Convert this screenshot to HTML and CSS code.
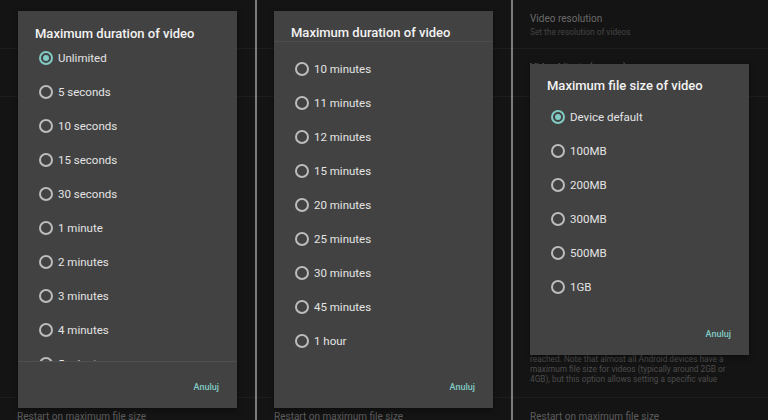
FILE: index.html
```html
<!DOCTYPE html>
<html>
<head>
<meta charset="utf-8">
<link rel="stylesheet" href="styles.css">
</head>
<body>
<div class="screens">

  <section class="panel">
    <div class="bg">
      <div class="pref blank top"></div>
      <div class="pref blank"></div>
      <div class="spacer"></div>
      <div class="pref blank"></div>
      <div class="pref last">
        <div class="pref-title">Restart on maximum file size</div>
      </div>
    </div>
    <div class="dialog d1">
      <div class="dlg-title">Maximum duration of video</div>
      <div class="list clipped">
        <div class="opt"><span class="radio on"></span>Unlimited</div>
        <div class="opt"><span class="radio"></span>5 seconds</div>
        <div class="opt"><span class="radio"></span>10 seconds</div>
        <div class="opt"><span class="radio"></span>15 seconds</div>
        <div class="opt"><span class="radio"></span>30 seconds</div>
        <div class="opt"><span class="radio"></span>1 minute</div>
        <div class="opt"><span class="radio"></span>2 minutes</div>
        <div class="opt"><span class="radio"></span>3 minutes</div>
        <div class="opt"><span class="radio"></span>4 minutes</div>
        <div class="opt"><span class="radio"></span>5 minutes</div>
      </div>
      <div class="actions"><span class="btn">Anuluj</span></div>
    </div>
  </section>

  <div class="sep"></div>

  <section class="panel">
    <div class="bg">
      <div class="pref blank top"></div>
      <div class="pref blank"></div>
      <div class="spacer"></div>
      <div class="pref blank"></div>
      <div class="pref last">
        <div class="pref-title">Restart on maximum file size</div>
      </div>
    </div>
    <div class="dialog d2">
      <div class="dlg-title ruled">Maximum duration of video</div>
      <div class="list">
        <div class="opt"><span class="radio"></span>10 minutes</div>
        <div class="opt"><span class="radio"></span>11 minutes</div>
        <div class="opt"><span class="radio"></span>12 minutes</div>
        <div class="opt"><span class="radio"></span>15 minutes</div>
        <div class="opt"><span class="radio"></span>20 minutes</div>
        <div class="opt"><span class="radio"></span>25 minutes</div>
        <div class="opt"><span class="radio"></span>30 minutes</div>
        <div class="opt"><span class="radio"></span>45 minutes</div>
        <div class="opt"><span class="radio"></span>1 hour</div>
      </div>
      <div class="actions"><span class="btn">Anuluj</span></div>
    </div>
  </section>

  <div class="sep"></div>

  <section class="panel">
    <div class="bg">
      <div class="pref first">
        <div class="pref-title">Video resolution</div>
        <div class="pref-sub">Set the resolution of videos</div>
      </div>
      <div class="pref second">
        <div class="pref-title">Video bitrate (approx)</div>
      </div>
      <div class="spacer"></div>
      <div class="pref desc">
        <div class="pref-sub">reached. Note that almost all Android devices have a</div>
        <div class="pref-sub">maximum file size for videos (typically around 2GB or</div>
        <div class="pref-sub">4GB), but this option allows setting a specific value</div>
      </div>
      <div class="pref last">
        <div class="pref-title">Restart on maximum file size</div>
      </div>
    </div>
    <div class="dialog d3">
      <div class="dlg-title">Maximum file size of video</div>
      <div class="list">
        <div class="opt"><span class="radio on"></span>Device default</div>
        <div class="opt"><span class="radio"></span>100MB</div>
        <div class="opt"><span class="radio"></span>200MB</div>
        <div class="opt"><span class="radio"></span>300MB</div>
        <div class="opt"><span class="radio"></span>500MB</div>
        <div class="opt"><span class="radio"></span>1GB</div>
      </div>
      <div class="actions"><span class="btn">Anuluj</span></div>
    </div>
  </section>

</div>
</body>
</html>
```

FILE: styles.css
```css
* { box-sizing: border-box; }

html, body {
  margin: 0;
  padding: 0;
  width: 768px;
  height: 420px;
  overflow: hidden;
  background: #141414;
  font-family: Roboto, "Noto Sans", "Liberation Sans", sans-serif;
}

.screens {
  display: flex;
  width: 768px;
  height: 420px;
}

.panel {
  position: relative;
  flex: 0 0 255px;
  height: 420px;
  background: #141414;
  overflow: hidden;
}

.panel:nth-child(3) { flex-basis: 254px; }

.sep {
  flex: 0 0 2px;
  background: #7c7c7c;
}

/* background settings list (dimmed) */
.bg {
  display: flex;
  flex-direction: column;
  height: 100%;
}

.pref {
  flex: 0 0 auto;
  padding: 0 17px;
  border-bottom: 1px solid #1d1d1d;
}

.pref.blank { height: 48px; }
.pref.blank.top { height: 49px; }

.pref.first { height: 49px; padding-top: 12px; }
.pref.second { height: 48px; padding-top: 12px; }

.pref-title {
  font-size: 10px;
  line-height: 14px;
  color: #6a6a6a;
  white-space: nowrap;
}

.pref-sub {
  font-size: 8.3px;
  line-height: 12px;
  color: #444444;
  white-space: nowrap;
}

.spacer { flex: 1; }

.desc { padding-bottom: 13px; }
.desc .pref-sub { line-height: 10px; color: #4c4c4c; }

.pref.last {
  flex: 0 0 22px;
  height: 22px;
  border-bottom: none;
  padding-top: 12px;
}
.pref.last .pref-title { color: #5c5c5c; }

/* dialogs */
.dialog {
  position: absolute;
  width: 219px;
  background: #424242;
  display: flex;
  flex-direction: column;
  box-shadow: 0 2px 6px rgba(0,0,0,0.4);
}

.d1 { left: 18px; top: 11px; height: 397px; }
.d2 { left: 17px; top: 11px; height: 397px; }
.d3 { left: 17px; top: 64px; height: 291px; }

.dlg-title {
  padding: 16px 17px 0;
  font-size: 13px;
  line-height: 14px;
  font-weight: 500;
  color: #f2f2f2;
  white-space: nowrap;
}

.d2 .dlg-title { padding-top: 15px; }
.d3 .dlg-title { padding-top: 15px; }

.dlg-title.ruled {
  padding-bottom: 1px;
  border-bottom: 1px solid #4d4d4d;
}

.list {
  flex: 1;
  display: flex;
  flex-direction: column;
}

.list.clipped {
  overflow: hidden;
  border-bottom: 1px solid #4f4f4f;
}

.d2 .list { padding-top: 10px; }
.d3 .list { padding-top: 7px; padding-bottom: 5px; }

.opt {
  flex: 0 0 34px;
  height: 34px;
  display: flex;
  align-items: center;
  gap: 5px;
  padding-left: 21px;
  font-size: 11.5px;
  color: #e4e4e4;
  white-space: nowrap;
}

.radio {
  width: 14px;
  height: 14px;
  border: 2px solid #bcbcbc;
  border-radius: 50%;
  display: flex;
  align-items: center;
  justify-content: center;
  flex: 0 0 14px;
}

.radio.on { border-color: #80cbc4; }
.radio.on::after {
  content: "";
  width: 6px;
  height: 6px;
  border-radius: 50%;
  background: #80cbc4;
}

.actions {
  flex: 0 0 46px;
  height: 46px;
  display: flex;
  justify-content: flex-end;
  align-items: center;
  padding: 4px 18px 0 0;
}

.btn {
  font-size: 9px;
  font-weight: 500;
  color: #80cbc4;
}
```
